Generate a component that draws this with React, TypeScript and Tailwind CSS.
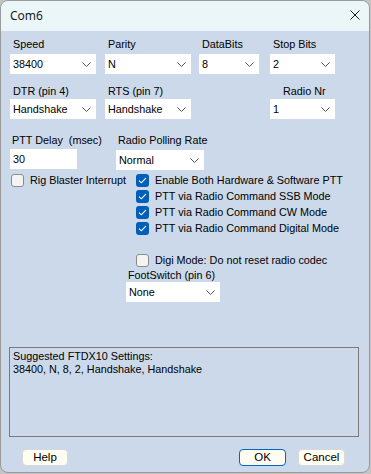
import React from "react";

const Chevron = () => (
  <svg width="9" height="5" viewBox="0 0 9 5" className="mr-[5px] shrink-0">
    <path d="M0.5 0.5 L4.5 4.5 L8.5 0.5" fill="none" stroke="#555" strokeWidth="1" />
  </svg>
);

function Select({ value, w }: { value: string; w: string }) {
  return (
    <div className={`${w} h-[20px] bg-white flex items-center justify-between pl-[3px]`}>
      <span className="leading-[13px]">{value}</span>
      <Chevron />
    </div>
  );
}

function Check({ checked }: { checked: boolean }) {
  return checked ? (
    <div className="w-[13px] h-[13px] rounded-[3px] bg-[#005fb8] flex items-center justify-center shrink-0">
      <svg width="9" height="7" viewBox="0 0 9 7">
        <path d="M1 3.6 L3.3 5.8 L8 1" fill="none" stroke="#fff" strokeWidth="1.1" />
      </svg>
    </div>
  ) : (
    <div className="w-[13px] h-[13px] rounded-[3px] bg-[#f4f4f4] border border-[#8b8b8b] shrink-0" />
  );
}

function CheckRow({ checked, label }: { checked: boolean; label: string }) {
  return (
    <div className="flex items-start h-[16px]">
      <Check checked={checked} />
      <span className="ml-[6px] leading-[13px] whitespace-nowrap">{label}</span>
    </div>
  );
}

export default function App() {
  return (
    <div className="w-[371px] h-[474px] bg-[#c4c4c4] font-['Liberation_Sans',Arial,sans-serif] text-[10.8px] text-black">
      <div className="w-[370px] h-[473px] border border-[#9a9a9a] rounded-[8px] overflow-hidden flex flex-col bg-[#ccd9ea]">
        {/* title bar */}
        <div className="h-[30px] bg-[#eaf6f8] flex items-center justify-between pl-[9px] pr-[9px] shrink-0">
          <span className="font-['Noto_Sans',sans-serif] text-[12px] leading-[16px] text-[#1a1a1a] -mt-[1px]">Com6</span>
          <svg width="10" height="10" viewBox="0 0 10 10" className="-mt-[2px]">
            <path d="M0.5 0.5 L9.5 9.5 M9.5 0.5 L0.5 9.5" stroke="#1a1a1a" strokeWidth="1" />
          </svg>
        </div>

        {/* body */}
        <div className="flex flex-col pt-[7px]">
          {/* row 1 */}
          <div className="flex">
            <div className="ml-[9px] w-[86px] flex flex-col">
              <span className="pl-[3px] h-[13px] leading-[13px]">Speed</span>
              <div className="mt-[3px]"><Select value="38400" w="w-[86px]" /></div>
            </div>
            <div className="ml-[9px] w-[86px] flex flex-col">
              <span className="pl-[3px] h-[13px] leading-[13px]">Parity</span>
              <div className="mt-[3px]"><Select value="N" w="w-[86px]" /></div>
            </div>
            <div className="ml-[8px] w-[60px] flex flex-col">
              <span className="pl-[3px] h-[13px] leading-[13px]">DataBits</span>
              <div className="mt-[3px]"><Select value="8" w="w-[60px]" /></div>
            </div>
            <div className="ml-[11px] w-[65px] flex flex-col">
              <span className="pl-[3px] h-[13px] leading-[13px]">Stop Bits</span>
              <div className="mt-[3px]"><Select value="2" w="w-[65px]" /></div>
            </div>
          </div>

          {/* row 2 */}
          <div className="flex mt-[11px]">
            <div className="ml-[9px] w-[86px] flex flex-col">
              <span className="pl-[3px] h-[13px] leading-[13px]">DTR (pin 4)</span>
              <div className="mt-[1px]"><Select value="Handshake" w="w-[86px]" /></div>
            </div>
            <div className="ml-[9px] w-[86px] flex flex-col">
              <span className="pl-[3px] h-[13px] leading-[13px]">RTS (pin 7)</span>
              <div className="mt-[1px]"><Select value="Handshake" w="w-[86px]" /></div>
            </div>
            <div className="ml-[79px] w-[65px] flex flex-col">
              <span className="pl-[13px] h-[13px] leading-[13px]">Radio Nr</span>
              <div className="mt-[1px]"><Select value="1" w="w-[65px]" /></div>
            </div>
          </div>

          {/* row 3 */}
          <div className="flex mt-[15px]">
            <div className="ml-[9px] w-[67px] flex flex-col">
              <span className="pl-[2px] h-[13px] leading-[13px] whitespace-pre">PTT Delay  (msec)</span>
              <div className="mt-[2px] w-[67px] h-[20px] bg-white flex items-center pl-[3px]">
                <span className="leading-[13px]">30</span>
              </div>
            </div>
            <div className="ml-[39px] w-[88px] flex flex-col">
              <span className="pl-[2px] h-[13px] leading-[13px] whitespace-nowrap">Radio Polling Rate</span>
              <div className="mt-[3px]"><Select value="Normal" w="w-[88px]" /></div>
            </div>
          </div>

          {/* row 4: checkboxes */}
          <div className="flex mt-[4px]">
            <div className="ml-[10px] w-[125px]">
              <CheckRow checked={false} label="Rig Blaster Interrupt" />
            </div>
            <div className="flex flex-col">
              <CheckRow checked={true} label="Enable Both Hardware & Software PTT" />
              <CheckRow checked={true} label="PTT via Radio Command SSB Mode" />
              <CheckRow checked={true} label="PTT via Radio Command CW Mode" />
              <CheckRow checked={true} label="PTT via Radio Command Digital Mode" />
            </div>
          </div>

          {/* digi */}
          <div className="flex mt-[16px] ml-[135px]">
            <div className="flex items-start h-[13px]">
              <Check checked={false} />
              <span className="ml-[6px] leading-[13px] whitespace-nowrap">Digi Mode: Do not reset radio codec</span>
            </div>
          </div>

          {/* footswitch */}
          <div className="flex flex-col mt-[2px] ml-[125px] w-[94px]">
            <span className="pl-[2px] h-[13px] leading-[13px] whitespace-nowrap">FootSwitch (pin 6)</span>
            <Select value="None" w="w-[94px]" />
          </div>

          {/* suggested box */}
          <div className="mt-[45px] ml-[8px] w-[350px] h-[90px] border border-[#7a7a7a] pl-[3px] pt-[2px] flex flex-col">
            <span className="leading-[13px]">Suggested FTDX10 Settings:</span>
            <span className="leading-[13px]">38400, N, 8, 2, Handshake, Handshake</span>
          </div>

          {/* buttons */}
          <div className="flex mt-[12px]">
            <div className="ml-[21px] w-[46px] h-[17px] bg-[#fffcf2] border border-[#d8d8d8] rounded-[4px] flex items-center justify-center">
              <span className="leading-[13px] text-[11.5px]">Help</span>
            </div>
            <div className="ml-[171px] w-[47px] h-[17px] bg-[#fffcf2] border border-[#0067c0] rounded-[4px] flex items-center justify-center">
              <span className="leading-[13px] text-[11.5px]">OK</span>
            </div>
            <div className="ml-[12px] w-[47px] h-[17px] bg-[#fffcf2] border border-[#d8d8d8] rounded-[4px] flex items-center justify-center">
              <span className="leading-[13px] text-[11.5px]">Cancel</span>
            </div>
          </div>
        </div>
      </div>
    </div>
  );
}
